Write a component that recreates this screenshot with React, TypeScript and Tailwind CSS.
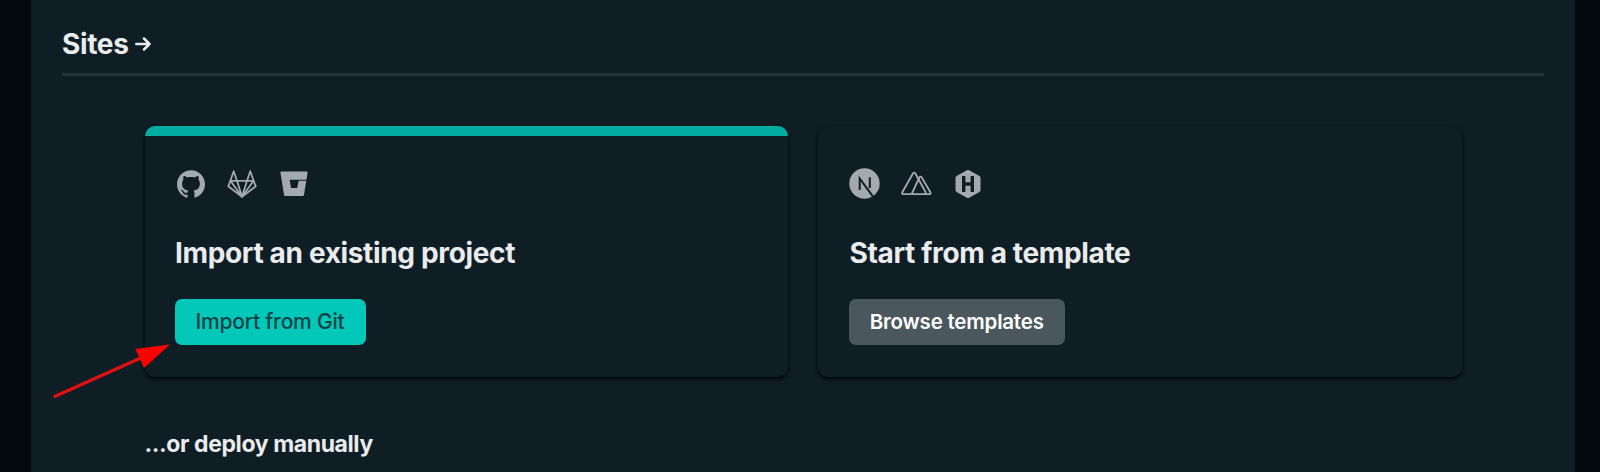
import { SiGithub } from "react-icons/si";
import type { ReactNode } from "react";

function GitlabOutline() {
  return (
    <svg viewBox="0 0 30 28" className="h-[28px] w-[30px]" fill="none" stroke="currentColor" strokeWidth="1.8" strokeLinejoin="round">
      <path d="M6.7 1.2 10 10.8H20L23.3 1.2 26.6 10.8 28.8 16.3 15 26.8 1.2 16.3 3.4 10.8Z" />
      <path d="M3.4 10.8H10L15 26.8 20 10.8H26.6L15 26.8Z" />
    </svg>
  );
}

function BitbucketLogo() {
  return (
    <svg viewBox="0 0 28 26" className="h-[26px] w-[28px]">
      <path
        d="M1 .6H27Q27.7 .6 27.6 1.3L26.5 8.8H9.6L11.1 17H17.2L18.6 9.8H26.3L23.9 24.3Q23.8 25 23 25H5Q4.2 25 4.1 24.3L.4 1.3Q.3 .6 1 .6Z"
        fill="currentColor"
      />
    </svg>
  );
}

function NextLogo() {
  return (
    <svg viewBox="0 0 31 31" className="h-[31px] w-[31px]">
      <circle cx="15.5" cy="15.5" r="15.2" fill="currentColor" />
      <path d="M10.7 22V10.5L24 28.6M20.8 9.3V20" fill="none" stroke="#0f1e25" strokeWidth="2" />
    </svg>
  );
}

function NuxtLogo() {
  return (
    <svg viewBox="0 0 31 25" className="h-[25px] w-[31px]" fill="none" stroke="currentColor" strokeWidth="1.8" strokeLinejoin="round">
      <path d="M10.6 23.2H2.2Q.6 23 1.3 21.3L12.1 2.3Q13.2 .8 14.3 2.3L24.6 21.3Q25 23 23.6 23.2" />
      <path d="M10.6 23.2 18.4 6.5Q19.6 4.6 20.8 6.5L29.4 21.3Q30.2 23 28.6 23.2H10.6" />
    </svg>
  );
}

function HugoLogo() {
  return (
    <svg viewBox="0 0 26 30" className="h-[30px] w-[26px]">
      <path d="M11.8 1.3Q13 .6 14.2 1.3L24.4 7Q25.5 7.7 25.5 9V21Q25.5 22.3 24.4 23L14.2 28.7Q13 29.4 11.8 28.7L1.6 23Q.5 22.3 .5 21V9Q.5 7.7 1.6 7Z" fill="currentColor" />
      <path d="M8.7 7V23M17.3 7V23M8.7 15H17.3" fill="none" stroke="#0f1e25" strokeWidth="3.4" />
    </svg>
  );
}

function Card({ icons, title, action, accent }: { icons: ReactNode; title: string; action: ReactNode; accent?: boolean }) {
  return (
    <section className="h-[251px] w-[643.5px] overflow-hidden rounded-[10px] bg-[#0f1e25] shadow-[0_2px_4px_rgba(0,0,0,0.9)]">
      <div className={accent ? "h-[10px] bg-[#02ada0]" : "h-[10px]"} />
      <div className={accent ? "px-[30px] pt-[32px]" : "px-[31px] pt-[32px]"}>
        <div className="flex h-[31px] items-center text-[#a3a9ac]">{icons}</div>
        <h2 className="mt-[36px] ml-[0.5px] text-[28px] leading-[36px] font-[650] tracking-[-0.35px] whitespace-nowrap text-[#e9ebed]">{title}</h2>
        <div className="mt-[28px]">{action}</div>
      </div>
    </section>
  );
}

export default function App() {
  return (
    <div className="h-[472px] overflow-hidden bg-[#02090c] font-['Inter',sans-serif]">
      <main className="relative ml-[31px] h-full w-[1544px] bg-[#0f1e25] px-[31px]">
        <header className="flex h-[76px] items-center border-b-[3px] border-[#24333a] pt-[15px]">
          <h1 className="text-[28px] leading-[36px] font-[650] tracking-[-0.35px] text-[#e9ebed]">Sites</h1>
          <svg viewBox="0 0 16 14" className="ml-[6px] h-[14px] w-[16px]" fill="none" stroke="#e9ebed" strokeWidth="2.5" strokeLinecap="round" strokeLinejoin="round">
            <path d="M1.3 7H14.5M9 1.5 14.5 7 9 12.5" />
          </svg>
        </header>
        <div className="mt-[50px] ml-[82.5px] flex gap-[30px]">
          <Card
            accent
            title="Import an existing project"
            icons={
              <>
                <SiGithub className="ml-[2px] h-[28px] w-[28px]" />
                <span className="ml-[22.5px]"><GitlabOutline /></span>
                <span className="ml-[23px]"><BitbucketLogo /></span>
              </>
            }
            action={
              <button className="block h-[46px] w-[191px] rounded-[7px] bg-[#02c8b9] text-[21px] font-medium tracking-[-0.2px] whitespace-nowrap text-[#054144]">Import from Git</button>
            }
          />
          <Card
            title="Start from a template"
            icons={
              <>
                <NextLogo />
                <span className="ml-[21px]"><NuxtLogo /></span>
                <span className="ml-[22.5px]"><HugoLogo /></span>
              </>
            }
            action={
              <button className="block h-[46px] w-[215.5px] rounded-[7px] bg-[#4a575d] text-[20.5px] font-semibold tracking-[-0.2px] whitespace-nowrap text-white">Browse templates</button>
            }
          />
        </div>
        <h3 className="mt-[51px] ml-[82.5px] text-[23px] leading-[32px] font-[650] tracking-[-0.4px] text-[#e9ebed]">...or deploy manually</h3>
        <svg viewBox="0 0 120 60" className="absolute top-[340px] left-[19px] h-[60px] w-[120px]">
          <path d="M3.5 57 93 17" stroke="#e01010" strokeWidth="3.2" />
          <path d="M120 4.5 85.5 9 94 28Z" fill="#ff0000" />
        </svg>
      </main>
    </div>
  );
}
